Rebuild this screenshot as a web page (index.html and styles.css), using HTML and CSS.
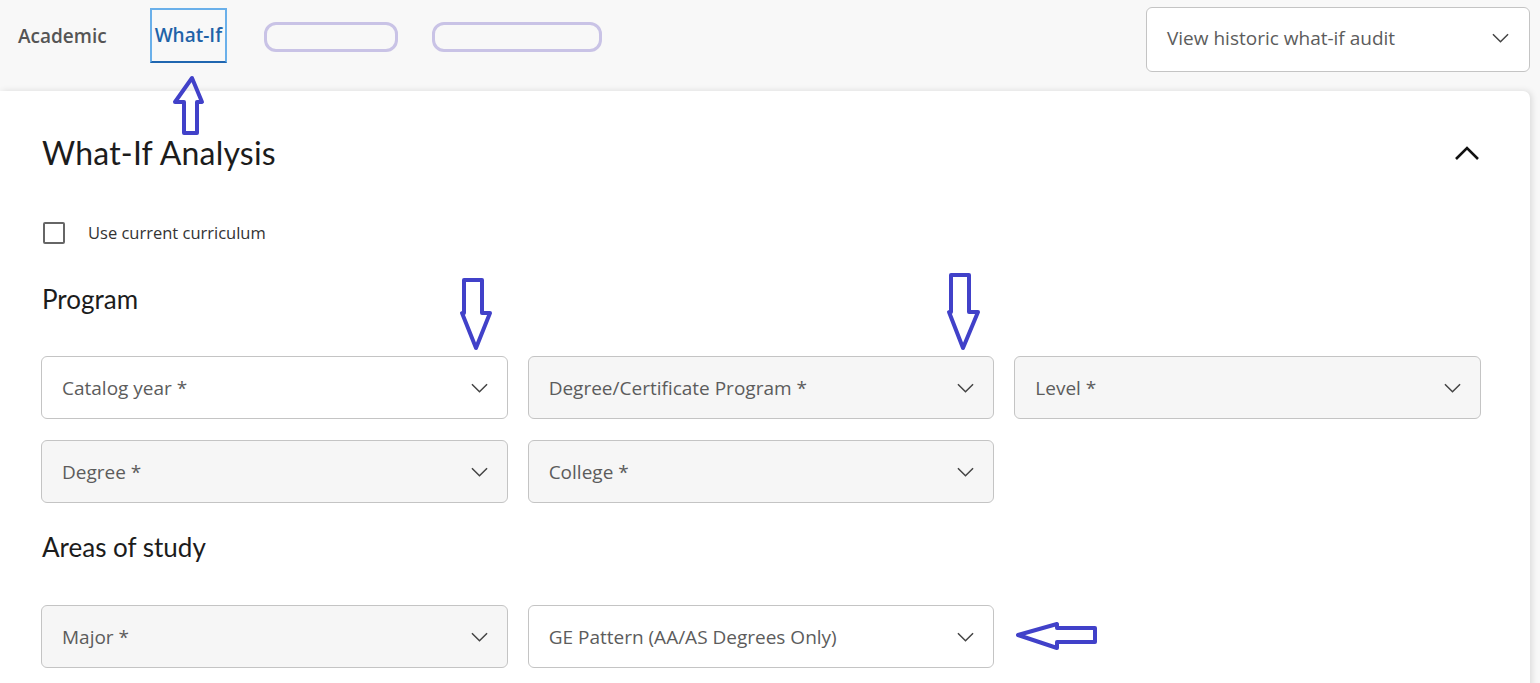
FILE: index.html
```html
<!DOCTYPE html>
<html>
<head>
    <title>What-If Analysis</title>
    <link rel="stylesheet" href="styles.css">
</head>
<body>

    <header class="topbar">
        <nav class="tabs">
            <a class="tab" href="#">Academic</a>
            <a class="tab active" href="#">What-If</a>
            <span class="tab blank short"></span>
            <span class="tab blank long"></span>
        </nav>
        <div class="select history">
            <span>View historic what-if audit</span>
            <svg class="chev" viewBox="0 0 18 10"><path d="M1 1l8 8 8-8"/></svg>
        </div>
    </header>

    <main class="card">
        <div class="card-head">
            <h1>What-If Analysis</h1>
            <svg class="collapse" viewBox="0 0 26 16"><path d="M2 14L13 3l11 11"/></svg>
        </div>

        <label class="check">
            <span class="box"></span>
            Use current curriculum
        </label>

        <h2>Program</h2>
        <div class="fields">
            <div class="select">
                <span>Catalog year *</span>
                <svg class="chev" viewBox="0 0 18 10"><path d="M1 1l8 8 8-8"/></svg>
            </div>
            <div class="select disabled">
                <span>Degree/Certificate Program *</span>
                <svg class="chev" viewBox="0 0 18 10"><path d="M1 1l8 8 8-8"/></svg>
            </div>
            <div class="select disabled">
                <span>Level *</span>
                <svg class="chev" viewBox="0 0 18 10"><path d="M1 1l8 8 8-8"/></svg>
            </div>
            <div class="select disabled">
                <span>Degree *</span>
                <svg class="chev" viewBox="0 0 18 10"><path d="M1 1l8 8 8-8"/></svg>
            </div>
            <div class="select disabled">
                <span>College *</span>
                <svg class="chev" viewBox="0 0 18 10"><path d="M1 1l8 8 8-8"/></svg>
            </div>
        </div>

        <h2 class="areas">Areas of study</h2>
        <div class="fields">
            <div class="select disabled">
                <span>Major *</span>
                <svg class="chev" viewBox="0 0 18 10"><path d="M1 1l8 8 8-8"/></svg>
            </div>
            <div class="select">
                <span>GE Pattern (AA/AS Degrees Only)</span>
                <svg class="chev" viewBox="0 0 18 10"><path d="M1 1l8 8 8-8"/></svg>
            </div>
        </div>
    </main>

    <!-- annotation arrows drawn over the screenshot -->
    <svg class="marks" viewBox="0 0 1540 683">
        <polygon points="192,78 202,102 197,102 197,133 184,133 184,102 175,102"/>
        <polygon points="464,280 482,280 482,313 490,313 476,348 462,313 464,313"/>
        <polygon points="951,275 969,275 969,312 978,312 963,348 949,312 951,312"/>
        <polygon points="1018,635 1057,624 1057,628 1095,628 1095,642 1057,642 1057,648"/>
    </svg>

</body>
</html>
```

FILE: styles.css
```css
html {
    overflow: hidden;
}

body {
    margin: 0;
    background: #f8f8f8;
    font-family: "Open Sans", "Liberation Sans", sans-serif;
    color: #333;
    height: 683px;
    overflow: hidden;
}

.topbar {
    display: flex;
    justify-content: space-between;
    align-items: flex-start;
    height: 91px;
    padding: 7px 10px 0 0;
    box-sizing: border-box;
}

.tabs {
    display: flex;
    align-items: center;
    height: 57px;
    padding-left: 18px;
}

.tab {
    font-size: 19px;
    font-weight: 600;
    color: #555;
    text-decoration: none;
    margin-right: 32px;
}

.tab.active {
    color: #1f63a8;
    border: 2px solid #6ab0ea;
    border-bottom-color: #2066b0;
    padding: 12px 3px 13px;
    margin-left: 11px;
    margin-right: 37px;
}

.tab.blank {
    height: 24px;
    border: 3px solid #c9c3e6;
    border-radius: 12px;
    margin-top: 2px;
}

.tab.short { width: 128px; }
.tab.long { width: 164px; margin-left: 2px; }

.select {
    display: flex;
    justify-content: space-between;
    align-items: center;
    height: 63px;
    box-sizing: border-box;
    padding: 0 19px 0 20px;
    background: #fff;
    border: 1px solid #c4c4c4;
    border-radius: 6px;
    font-size: 19px;
    color: #5c5c5c;
}

.select.disabled {
    background: #f6f6f6;
}

.select.history {
    width: 384px;
    height: 65px;
    padding-right: 20px;
    padding-bottom: 3px;
}

.chev {
    width: 17px;
    height: 10px;
    fill: none;
    stroke: #444;
    stroke-width: 1.6;
}

.card {
    background: #fff;
    margin-right: 10px;
    border-top-right-radius: 7px;
    box-shadow: 2px 0 6px rgba(0, 0, 0, 0.12);
    padding: 42px 49px 20px 42px;
    min-height: 600px;
}

.card-head {
    display: flex;
    justify-content: space-between;
    align-items: center;
}

h1 {
    margin: 0;
    font-family: Lato, "Open Sans", sans-serif;
    font-weight: 400;
    font-size: 32px;
    color: #1c1c1c;
    letter-spacing: 0.2px;
}

.collapse {
    width: 26px;
    height: 16px;
    margin-right: 1px;
    fill: none;
    stroke: #111;
    stroke-width: 2.6;
}

.check {
    display: flex;
    align-items: center;
    gap: 23px;
    margin-top: 49px;
    font-size: 16.5px;
    color: #333;
}

.box {
    width: 18px;
    height: 18px;
    margin-left: 1px;
    border: 2px solid #666;
    border-radius: 2px;
}

h2 {
    margin: 39px 0 41px;
    font-family: Lato, "Open Sans", sans-serif;
    font-weight: 400;
    font-size: 26px;
    color: #1c1c1c;
}

h2.areas {
    margin-top: 28px;
    margin-bottom: 42px;
}

.fields {
    display: grid;
    grid-template-columns: repeat(3, 1fr);
    column-gap: 20px;
    row-gap: 21px;
    margin-left: -1px;
}

.marks {
    position: absolute;
    left: 0;
    top: 0;
    width: 1540px;
    height: 683px;
    pointer-events: none;
}

.marks polygon {
    fill: none;
    stroke: #4141c9;
    stroke-width: 4;
    stroke-linejoin: round;
}
```
